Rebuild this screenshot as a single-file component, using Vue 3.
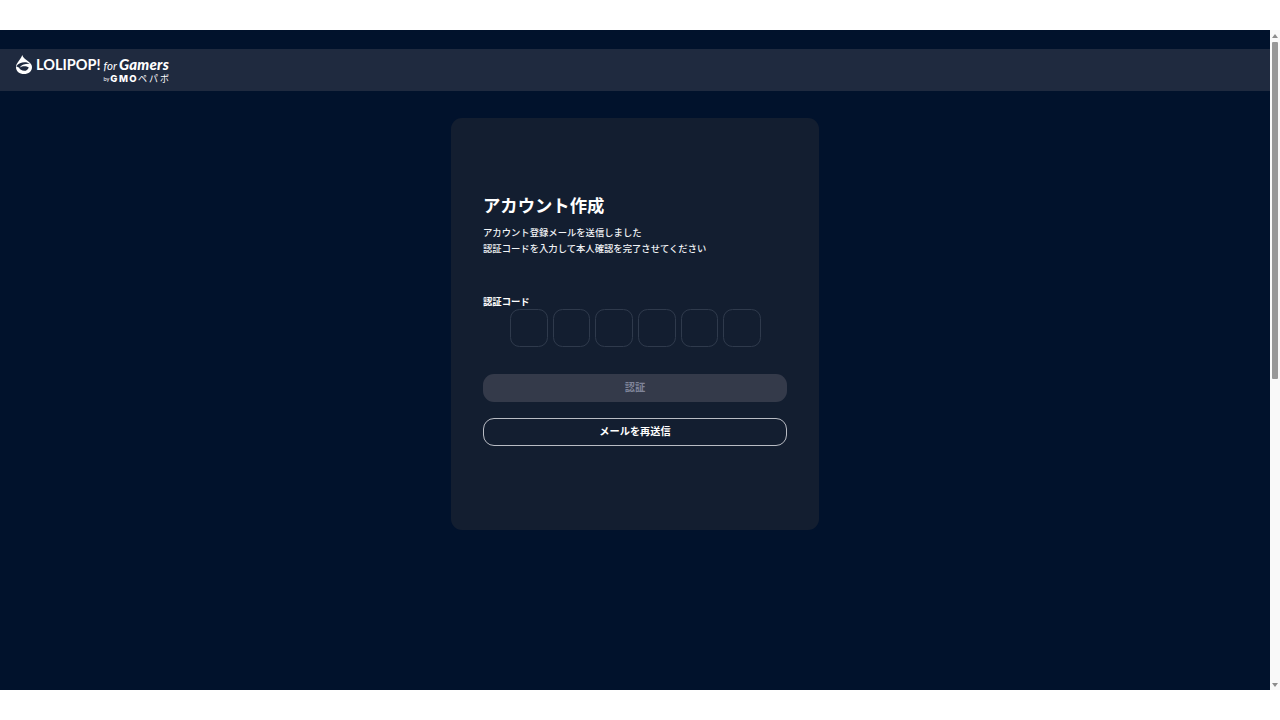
<script setup>
const digits = [1, 2, 3, 4, 5, 6]
</script>

<template>
  <div class="window">
    <div class="strip"></div>
    <div class="viewport">
      <div class="page">
        <header class="header">
          <div class="logo">
            <svg class="mark" viewBox="0 0 16 19" width="16" height="19" aria-hidden="true">
              <path fill="#fff" d="M6.2 0C7 3 10 4.6 13 7C15 8.7 16 10.4 16 12.2C16 16.2 12.5 19 8 19C3.5 19 0 16.2 0 12.2C0 7.6 4.8 5 6.2 0Z"/>
              <path fill="#1f2a3f" d="M0.2 11.2C2.2 8.6 5.4 7.2 8.6 7.2C10.8 7.2 12.6 7.8 13.8 8.8C11.8 8.6 9.6 8.8 7.6 9.6C5.8 10.3 4.6 11.4 4 12.6C6 10.9 10.2 10.7 12.8 12.4C11.8 14.8 10.2 15.8 8.4 15.8C5.8 15.8 3.6 14.4 3.2 12.8C2.2 12.2 1.2 11.6 0.2 11.2Z"/>
            </svg>
            <div class="wordmark">
              <div class="line-main">
                <span class="brand">LOLIPOP!</span>
                <span class="for">for</span>
                <span class="gamers">Gamers</span>
              </div>
              <div class="line-sub">
                <span class="by">by</span>
                <span class="gmo">GMO</span>
                <span class="pepabo">ペパボ</span>
              </div>
            </div>
          </div>
        </header>

        <main class="content">
          <section class="card">
            <h1 class="title">アカウント作成</h1>
            <p class="lead">アカウント登録メールを送信しました<br />認証コードを入力して本人確認を完了させてください</p>
            <label class="label">認証コード</label>
            <div class="code-row">
              <input v-for="d in digits" :key="d" class="code" type="text" maxlength="1" />
            </div>
            <button class="btn btn-disabled" type="button">認証</button>
            <button class="btn btn-outline" type="button">メールを再送信</button>
          </section>
        </main>
      </div>

      <div class="scrollbar">
        <span class="arrow arrow-up"></span>
        <span class="thumb"></span>
        <span class="track"></span>
        <span class="arrow arrow-down"></span>
      </div>
    </div>
    <div class="strip"></div>
  </div>
</template>

<style scoped>
.window {
  width: 1280px;
  height: 720px;
  display: flex;
  flex-direction: column;
  background: #fff;
  overflow: hidden;
  font-family: "Noto Sans CJK JP", "Noto Sans", sans-serif;
}
.strip {
  height: 30px;
  flex: none;
  background: #fff;
}
.viewport {
  height: 660px;
  flex: none;
  display: flex;
}
.page {
  flex: 1;
  background: #01122c;
  padding-top: 19px;
  min-width: 0;
}
.header {
  height: 42px;
  background: #1f2a3f;
  display: flex;
  align-items: flex-start;
  padding: 6px 0 0 16px;
  box-sizing: border-box;
}
.logo {
  display: flex;
  align-items: flex-start;
  gap: 4px;
}
.mark {
  flex: none;
}
.wordmark {
  width: 134px;
  color: #fff;
  font-family: "Lato", "Noto Sans", sans-serif;
}
.line-main {
  display: flex;
  align-items: baseline;
  height: 19px;
  line-height: 19px;
  white-space: nowrap;
}
.brand {
  font-size: 14.5px;
  font-weight: 700;
}
.for {
  margin-left: 3px;
  font-size: 11.5px;
  font-style: italic;
  font-weight: 400;
}
.gamers {
  margin-left: 2px;
  font-size: 15px;
  font-style: italic;
  font-weight: 900;
  letter-spacing: 0.25px;
}
.line-sub {
  display: flex;
  align-items: center;
  justify-content: flex-end;
  height: 8px;
  margin-top: 1px;
  line-height: 8px;
  white-space: nowrap;
}
.by {
  font-size: 5.5px;
  margin-right: 1px;
}
.gmo {
  font-family: "Inter", "Lato", sans-serif;
  font-size: 9.5px;
  font-weight: 800;
  letter-spacing: 1.4px;
}
.pepabo {
  font-family: "Noto Sans CJK JP", sans-serif;
  font-size: 9px;
  font-weight: 400;
  letter-spacing: 2px;
  margin-right: -1px;
}
.content {
  display: flex;
  justify-content: center;
  padding-top: 27px;
}
.card {
  width: 368px;
  height: 412px;
  box-sizing: border-box;
  background: #131e30;
  border-radius: 11px;
  padding: 74px 32px 0;
  display: flex;
  flex-direction: column;
  color: #fff;
}
.title {
  margin: 0;
  font-size: 17.33px;
  line-height: 25px;
  font-weight: 700;
}
.lead {
  margin: 7px 0 0;
  font-size: 9.33px;
  line-height: 16px;
  font-weight: 500;
  color: #f1f3f6;
}
.label {
  margin-top: 38px;
  font-size: 9.33px;
  line-height: 14px;
  font-weight: 700;
}
.code-row {
  display: flex;
  gap: 5.2px;
  margin-top: 1px;
  padding-left: 27px;
}
.code {
  width: 37.5px;
  height: 38px;
  box-sizing: border-box;
  padding: 0;
  background: transparent;
  border: 1.33px solid #2f3a4c;
  border-radius: 9.5px;
  outline: none;
}
.btn {
  width: 100%;
  height: 28px;
  flex: none;
  box-sizing: border-box;
  border-radius: 11px;
  font-family: inherit;
  font-size: 10.2px;
  font-weight: 700;
  padding: 0 0 3px;
}
.btn-disabled {
  margin-top: 27px;
  background: #343a4a;
  border: none;
  color: #7f8499;
}
.btn-outline {
  margin-top: 16px;
  background: transparent;
  border: 1.33px solid #b9bcc4;
  color: #fff;
}
.scrollbar {
  width: 10px;
  flex: none;
  background: #f9f9f9;
  display: flex;
  flex-direction: column;
  align-items: center;
}
.arrow {
  flex: none;
  width: 0;
  height: 0;
  border-left: 3.5px solid transparent;
  border-right: 3.5px solid transparent;
}
.arrow-up {
  margin-top: 4px;
  border-bottom: 4px solid #8c8c8c;
}
.arrow-down {
  margin-bottom: 3px;
  border-top: 4px solid #8c8c8c;
}
.thumb {
  flex: none;
  width: 6px;
  height: 337px;
  margin-top: 4px;
  background: #989898;
  border-radius: 1px;
}
.track {
  flex: 1;
}
</style>
